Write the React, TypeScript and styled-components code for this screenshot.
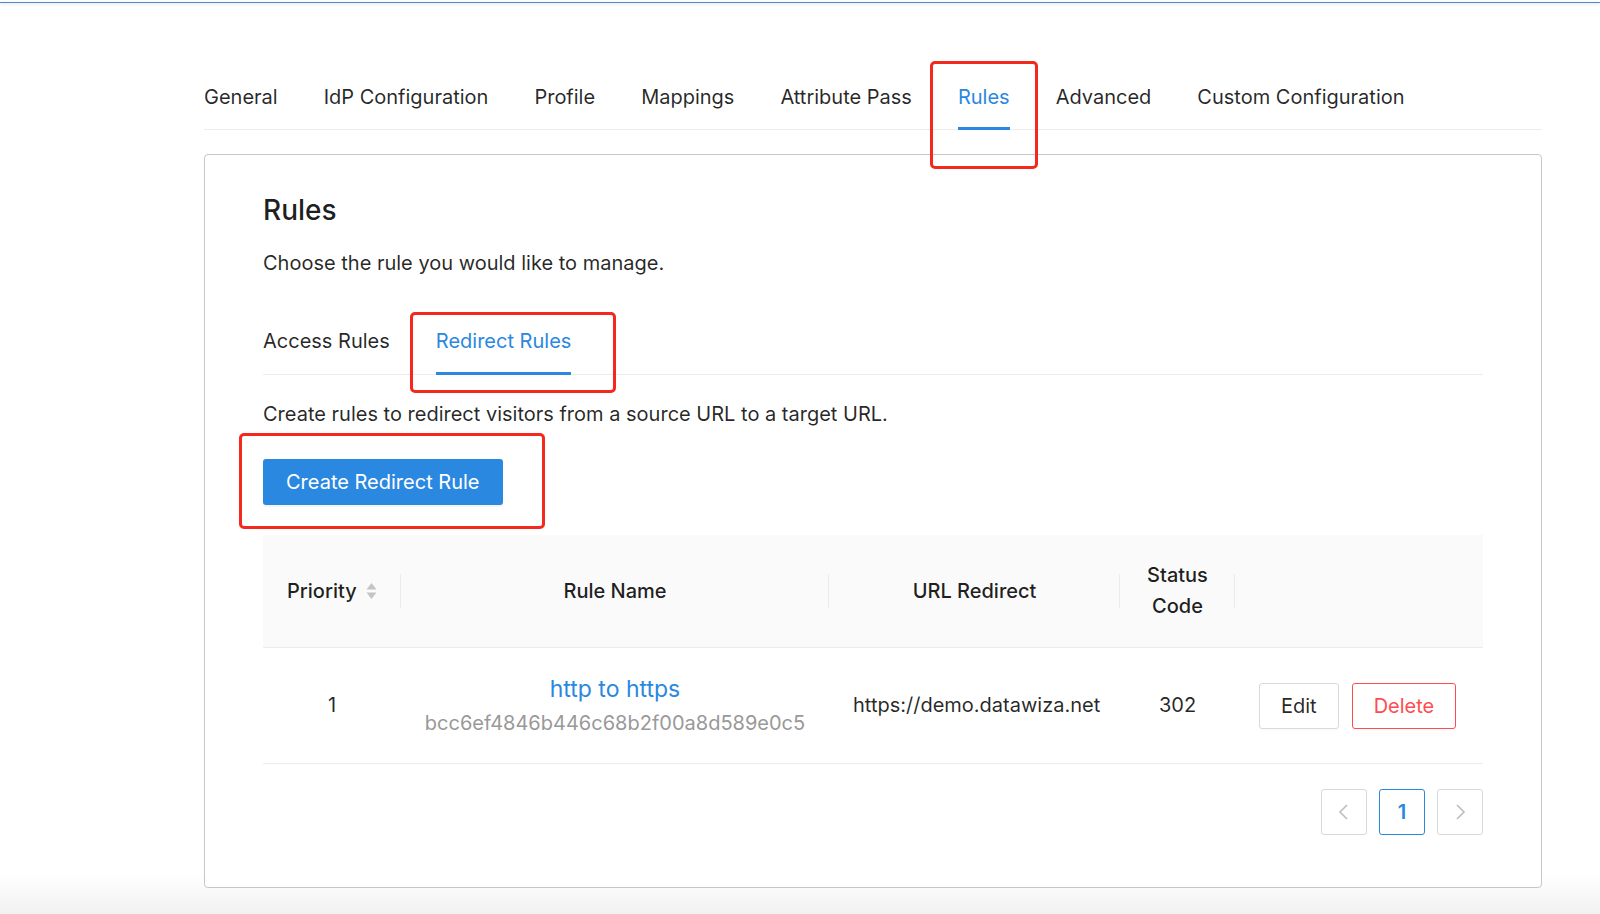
import React from "react"
import styled, { createGlobalStyle } from "styled-components"

const GlobalStyle = createGlobalStyle`
  body {
    margin: 0;
    font-family: Inter, "Noto Sans", "Liberation Sans", sans-serif;
    color: rgba(0, 0, 0, 0.85);
    background: #fff;
  }
`

const Page = styled.div`
  min-height: 914px;
  box-sizing: border-box;
  padding-top: 2px;
  background: linear-gradient(to bottom, #fff calc(100% - 40px), #f1f1f1 100%);
`

const TopLine = styled.div`
  height: 1px;
  background: #5b84c4;
  box-shadow: 0 1px 3px rgba(91, 132, 196, 0.35);
`

const Main = styled.main`
  padding: 60px 58px 26px 204px;
`

const TabNav = styled.nav<{ $gap: number }>`
  display: flex;
  gap: ${p => p.$gap}px;
  border-bottom: 1px solid #ececec;
`

const Tab = styled.div<{ $active?: boolean; $pt?: number; $pb?: number }>`
  position: relative;
  padding: ${p => p.$pt ?? 17}px 0 ${p => p.$pb ?? 17}px;
  font-size: 20px;
  line-height: 31px;
  color: ${p => (p.$active ? "#2a88e0" : "rgba(0, 0, 0, 0.85)")};
  white-space: nowrap;

  ${p =>
    p.$active &&
    `
    &::after {
      content: "";
      position: absolute;
      left: 0;
      right: 0;
      bottom: -1px;
      height: 3px;
      background: #2a88e0;
    }
  `}
`

// red annotation boxes drawn over the screenshot
const Highlight = styled.span<{ $t: number; $r: number; $b: number; $l: number }>`
  position: absolute;
  top: ${p => p.$t}px;
  right: ${p => p.$r}px;
  bottom: ${p => p.$b}px;
  left: ${p => p.$l}px;
  border: 3px solid #f4281c;
  border-radius: 5px;
  pointer-events: none;
`

const Card = styled.section`
  margin-top: 24px;
  border: 1px solid #c6c6c6;
  border-radius: 4px;
  background: #fff;
  padding: 36px 58px 52px;
`

const Title = styled.h2`
  margin: 0;
  font-size: 28px;
  line-height: 38px;
  font-weight: 500;
  color: rgba(0, 0, 0, 0.88);
`

const Text = styled.p<{ $mt: number; $mb: number }>`
  margin: ${p => p.$mt}px 0 ${p => p.$mb}px;
  font-size: 20px;
  line-height: 31px;
`

const SubNav = styled(TabNav)`
  margin-bottom: 24px;
`

const ButtonWrap = styled.div`
  position: relative;
  display: inline-block;
`

const PrimaryButton = styled.button`
  height: 46px;
  padding: 0 23px;
  border: none;
  border-radius: 3px;
  background: #2a88e0;
  color: #fff;
  font-family: inherit;
  font-size: 20px;
  box-shadow: 0 2px 0 rgba(0, 0, 0, 0.045);
`

const Table = styled.table`
  margin-top: 30px;
  width: 100%;
  border-collapse: collapse;
  table-layout: fixed;
  font-size: 20px;
  line-height: 31px;
`

const Th = styled.th<{ $left?: boolean; $divider?: boolean }>`
  position: relative;
  padding: 25px 24px;
  background: #fafafa;
  font-weight: 500;
  text-align: ${p => (p.$left ? "left" : "center")};
  border-bottom: 1px solid #ececec;
  color: rgba(0, 0, 0, 0.88);

  ${p =>
    p.$divider &&
    `
    &::before {
      content: "";
      position: absolute;
      right: 0;
      top: 50%;
      width: 1px;
      height: 34px;
      transform: translateY(-50%);
      background: #ececec;
    }
  `}
`

const Td = styled.td<{ $left?: boolean }>`
  padding: 24px;
  text-align: ${p => (p.$left ? "left" : "center")};
  border-bottom: 1px solid #ececec;
`

const HeadLabel = styled.span`
  display: inline-flex;
  align-items: center;
  gap: 9px;
`

const NameCell = styled.div`
  display: flex;
  flex-direction: column;
  align-items: center;
  gap: 2px;
  white-space: nowrap;
`

const NameLink = styled.a`
  color: #2a88e0;
  text-decoration: none;
  font-size: 23px;
  line-height: 34px;
`

const Hash = styled.span`
  color: #999;
`

const Actions = styled.div`
  display: flex;
  gap: 13px;
`

const GhostButton = styled.button<{ $danger?: boolean }>`
  height: 46px;
  padding: 0 21px;
  border: 1px solid ${p => (p.$danger ? "#ff4d4f" : "#d9d9d9")};
  border-radius: 3px;
  background: #fff;
  color: ${p => (p.$danger ? "#ff4d4f" : "rgba(0, 0, 0, 0.85)")};
  font-family: inherit;
  font-size: 20px;
  box-shadow: 0 2px 0 rgba(0, 0, 0, 0.015);
`

const Pager = styled.div`
  display: flex;
  justify-content: flex-end;
  gap: 12px;
  margin-top: 25px;
`

const PageItem = styled.div<{ $active?: boolean }>`
  box-sizing: border-box;
  width: 46px;
  height: 46px;
  display: flex;
  align-items: center;
  justify-content: center;
  border: 1px solid ${p => (p.$active ? "#2a88e0" : "#d9d9d9")};
  border-radius: 3px;
  color: ${p => (p.$active ? "#2a88e0" : "#bfbfbf")};
  font-size: 20px;
  font-weight: 600;
`

const SortIcon = () => (
  <svg width="11" height="18" viewBox="0 0 11 18">
    <path d="M5.5 1 L10.5 7.5 H0.5 Z" fill="#c4c4c4" />
    <path d="M5.5 17 L10.5 10.5 H0.5 Z" fill="#c4c4c4" />
  </svg>
)

const Chevron = ({ left }: { left?: boolean }) => (
  <svg width="14" height="18" viewBox="0 0 14 18">
    <polyline
      points={left ? "10,2 3,9 10,16" : "4,2 11,9 4,16"}
      fill="none"
      stroke="#bdbdbd"
      strokeWidth="1.6"
    />
  </svg>
)

const mainTabs = ["General", "IdP Configuration", "Profile", "Mappings", "Attribute Pass", "Rules", "Advanced", "Custom Configuration"]

export default function App() {
  return (
    <Page>
      <GlobalStyle />
      <TopLine />
      <Main>
        <TabNav $gap={46}>
          {mainTabs.map(t => (
            <Tab key={t} $active={t === "Rules"} $pt={19} $pb={16}>
              {t}
              {t === "Rules" && <Highlight $t={-2} $r={-28} $b={-40} $l={-28} />}
            </Tab>
          ))}
        </TabNav>

        <Card>
          <Title>Rules</Title>
          <Text $mt={19} $mb={30}>Choose the rule you would like to manage.</Text>

          <SubNav $gap={46}>
            <Tab>Access Rules</Tab>
            <Tab $active>
              Redirect Rules
              <Highlight $t={3} $r={-45} $b={-19} $l={-26} />
            </Tab>
          </SubNav>

          <Text $mt={0} $mb={29}>Create rules to redirect visitors from a source URL to a target URL.</Text>

          <ButtonWrap>
            <PrimaryButton>Create Redirect Rule</PrimaryButton>
            <Highlight $t={-26} $r={-42} $b={-24} $l={-24} />
          </ButtonWrap>

          <Table>
            <colgroup>
              <col style={{ width: 138 }} />
              <col style={{ width: 428 }} />
              <col style={{ width: 291 }} />
              <col style={{ width: 115 }} />
              <col />
            </colgroup>
            <thead>
              <tr>
                <Th $left $divider>
                  <HeadLabel>
                    Priority <SortIcon />
                  </HeadLabel>
                </Th>
                <Th $divider>Rule Name</Th>
                <Th $divider>URL Redirect</Th>
                <Th $divider>Status Code</Th>
                <Th />
              </tr>
            </thead>
            <tbody>
              <tr>
                <Td>1</Td>
                <Td>
                  <NameCell>
                    <NameLink href="#">http to https</NameLink>
                    <Hash>bcc6ef4846b446c68b2f00a8d589e0c5</Hash>
                  </NameCell>
                </Td>
                <Td>https://demo.datawiza.net</Td>
                <Td>302</Td>
                <Td $left>
                  <Actions>
                    <GhostButton>Edit</GhostButton>
                    <GhostButton $danger>Delete</GhostButton>
                  </Actions>
                </Td>
              </tr>
            </tbody>
          </Table>

          <Pager>
            <PageItem>
              <Chevron left />
            </PageItem>
            <PageItem $active>1</PageItem>
            <PageItem>
              <Chevron />
            </PageItem>
          </Pager>
        </Card>
      </Main>
    </Page>
  )
}
